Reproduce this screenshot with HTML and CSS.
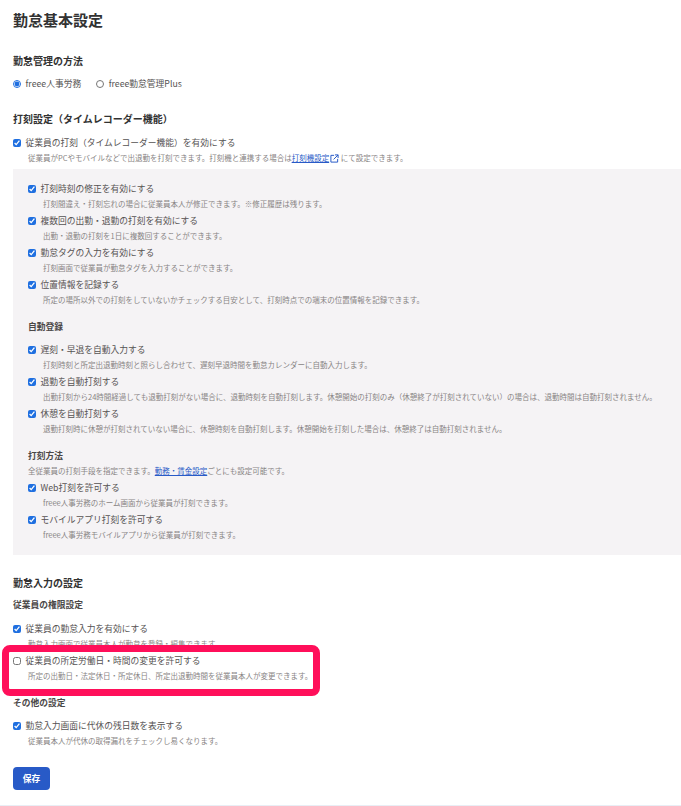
FILE: index.html
```html
<!DOCTYPE html>
<html lang="ja">
<head>
    <meta charset="UTF-8">
    <title>勤怠基本設定</title>
    <link rel="stylesheet" href="styles.css">
</head>
<body>
    <div class="page">
        <h1 class="title">勤怠基本設定</h1>

        <h2 class="section">勤怠管理の方法</h2>
        <div class="radio-group">
            <label><input type="radio" name="method" checked> freee人事労務</label>
            <label><input type="radio" name="method"> freee勤怠管理Plus</label>
        </div>

        <h2 class="section section--stamp">打刻設定（タイムレコーダー機能）</h2>
        <div class="option option--stamp">
            <label><input type="checkbox" checked> 従業員の打刻（タイムレコーダー機能）を有効にする</label>
            <p class="desc">従業員がPCやモバイルなどで出退勤を打刻できます。打刻機と連携する場合は<a href="#">打刻機設定</a><svg class="ext" viewBox="0 0 10 10"><path d="M4.500 1.500H1v7.500h7.500V5.500M5.500 1H9v3.500M9 1L4 6" fill="none" stroke="#285ac7" stroke-width="1.100"/></svg> にて設定できます。</p>
        </div>

        <div class="panel">
            <div class="option">
                <label><input type="checkbox" checked> 打刻時刻の修正を有効にする</label>
                <p class="desc">打刻間違え・打刻忘れの場合に従業員本人が修正できます。※修正履歴は残ります。</p>
            </div>
            <div class="option">
                <label><input type="checkbox" checked> 複数回の出勤・退勤の打刻を有効にする</label>
                <p class="desc">出勤・退勤の打刻を1日に複数回することができます。</p>
            </div>
            <div class="option">
                <label><input type="checkbox" checked> 勤怠タグの入力を有効にする</label>
                <p class="desc">打刻画面で従業員が勤怠タグを入力することができます。</p>
            </div>
            <div class="option">
                <label><input type="checkbox" checked> 位置情報を記録する</label>
                <p class="desc">所定の場所以外での打刻をしていないかチェックする目安として、打刻時点での端末の位置情報を記録できます。</p>
            </div>

            <h3 class="sub sub--auto">自動登録</h3>
            <div class="option">
                <label><input type="checkbox" checked> 遅刻・早退を自動入力する</label>
                <p class="desc">打刻時刻と所定出退勤時刻と照らし合わせて、遅刻早退時間を勤怠カレンダーに自動入力します。</p>
            </div>
            <div class="option">
                <label><input type="checkbox" checked> 退勤を自動打刻する</label>
                <p class="desc">出勤打刻から24時間経過しても退勤打刻がない場合に、退勤時刻を自動打刻します。休憩開始の打刻のみ（休憩終了が打刻されていない）の場合は、退勤時間は自動打刻されません。</p>
            </div>
            <div class="option">
                <label><input type="checkbox" checked> 休憩を自動打刻する</label>
                <p class="desc">退勤打刻時に休憩が打刻されていない場合に、休憩時刻を自動打刻します。休憩開始を打刻した場合は、休憩終了は自動打刻されません。</p>
            </div>

            <h3 class="sub sub--method">打刻方法</h3>
            <p class="desc desc--lead">全従業員の打刻手段を指定できます。<a href="#">勤務・賃金設定</a>ごとにも設定可能です。</p>
            <div class="option">
                <label><input type="checkbox" checked> Web打刻を許可する</label>
                <p class="desc">freee人事労務のホーム画面から従業員が打刻できます。</p>
            </div>
            <div class="option">
                <label><input type="checkbox" checked> モバイルアプリ打刻を許可する</label>
                <p class="desc">freee人事労務モバイルアプリから従業員が打刻できます。</p>
            </div>
        </div>

        <h2 class="section section--input">勤怠入力の設定</h2>
        <h3 class="sub sub--rights">従業員の権限設定</h3>
        <div class="option">
            <label><input type="checkbox" checked> 従業員の勤怠入力を有効にする</label>
            <p class="desc">勤怠入力画面で従業員本人が勤怠を登録・編集できます。</p>
        </div>
        <div class="option">
            <label><input type="checkbox"> 従業員の所定労働日・時間の変更を許可する</label>
            <p class="desc">所定の出勤日・法定休日・所定休日、所定出退勤時間を従業員本人が変更できます。</p>
        </div>
        <h3 class="sub sub--other">その他の設定</h3>
        <div class="option">
            <label><input type="checkbox" checked> 勤怠入力画面に代休の残日数を表示する</label>
            <p class="desc">従業員本人が代休の取得漏れをチェックし易くなります。</p>
        </div>

        <button class="save">保存</button>
        <div class="highlight"></div>
    </div>
</body>
</html>
```

FILE: styles.css
```css
* { box-sizing: border-box; }

html, body {
  margin: 0;
  padding: 0;
}

body {
  font-family: "Noto Sans CJK JP", "Noto Sans", sans-serif;
  font-size: 8.75px;
  color: #555252;
  background: #fff;
}

.page {
  position: relative;
  height: 806px;
  padding: 10px 0 0 13px;
  border-bottom: 1px solid #e9eef5;
  overflow: hidden;
}

.title {
  margin: 0;
  font-size: 15px;
  line-height: 20px;
  font-weight: 700;
  color: #323232;
}

.section {
  margin: 21px 0 0;
  font-size: 10px;
  line-height: 20px;
  font-weight: 700;
  color: #323232;
}

.section--stamp { margin-top: 18px; }
.section--input { margin-top: 18px; }

.sub {
  margin: 0;
  font-size: 8.75px;
  line-height: 14px;
  font-weight: 700;
  color: #4a4747;
}

.sub--auto { margin-top: 13px; margin-bottom: 9px; }
.sub--method { margin-top: 13px; }
.sub--rights { margin-top: 5px; margin-bottom: 10px; }
.sub--other { margin-top: 13px; margin-bottom: 9px; }

.radio-group {
  display: flex;
  gap: 15px;
  height: 14px;
  margin-top: 6px;
  line-height: 14px;
}

.radio-group label {
  display: flex;
  align-items: center;
  gap: 5px;
}

.option {
  margin-bottom: 3px;
}

.option--stamp {
  margin-top: 7px;
}

.option label {
  display: flex;
  align-items: center;
  gap: 5px;
  line-height: 14px;
}

input {
  width: 7.5px;
  height: 7.5px;
  margin: 0;
  accent-color: #1f6fe0;
}

.desc {
  margin: 1px 0 0 15px;
  font-size: 7.5px;
  line-height: 14px;
  color: #888484;
  white-space: nowrap;
}

.desc--lead {
  margin: 1px 0 3px;
}

.desc a {
  color: #285ac7;
  text-decoration: underline;
}

.ext {
  width: 9px;
  height: 9px;
  margin-left: 1px;
  vertical-align: -2px;
}

.panel {
  margin-top: 4px;
  height: 386px;
  padding: 13px 0 0 15px;
  background: #f5f3f5;
}

.save {
  display: block;
  width: 37px;
  height: 23px;
  margin-top: 19px;
  padding: 0;
  border: none;
  border-radius: 4px;
  background: #285ac7;
  color: #fff;
  font-family: inherit;
  font-size: 8.75px;
  font-weight: 700;
}

.highlight {
  position: absolute;
  left: 2px;
  top: 645px;
  width: 318px;
  height: 51px;
  border: 7px solid #ff0f5a;
  border-radius: 8px;
}
```
